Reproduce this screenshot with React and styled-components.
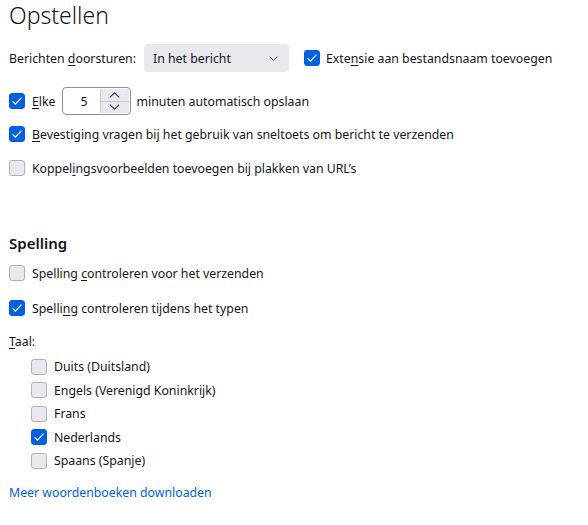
import React from "react";
import styled, { createGlobalStyle } from "styled-components";

const Global = createGlobalStyle`
  html, body { margin: 0; padding: 0; background: #ffffff; }
  body {
    font-family: "Noto Sans", "Open Sans", sans-serif;
    font-size: 12.3px;
    color: #15141a;
  }
`;

const Page = styled.div`
  display: flex;
  flex-direction: column;
  padding: 0 9px;
  width: 570px;
`;

const Title = styled.h1`
  margin: 0;
  line-height: 30px;
  font-size: 23px;
  font-weight: 300;
`;

const SubTitle = styled.h2`
  margin: 49px 0 0;
  line-height: 24px;
  font-size: 15px;
  font-weight: 600;
`;

const Row = styled.div`
  display: flex;
  align-items: center;
  height: ${(p) => p.$h || 28}px;
  margin-top: ${(p) => p.$mt || 0}px;
  padding-left: ${(p) => p.$indent || 0}px;
  white-space: nowrap;
`;

const Label = styled.span`
  margin-left: ${(p) => p.$ml || 0}px;
`;

const U = styled.span`
  text-decoration: underline;
  text-underline-offset: 2px;
`;

const Box = styled.span`
  flex: none;
  box-sizing: border-box;
  width: 16px;
  height: 16px;
  border-radius: 3px;
  display: inline-flex;
  align-items: center;
  justify-content: center;
  background: ${(p) => (p.$on ? "#0061e0" : "#e9e9ed")};
  border: 1px solid ${(p) => (p.$on ? "#0061e0" : "#b1b1b9")};
  margin-left: ${(p) => p.$ml || 0}px;
`;

const Check = ({ on, ml }) => (
  <Box $on={on} $ml={ml}>
    {on && (
      <svg width="14" height="14" viewBox="0 0 14 14">
        <path d="M2.6 7.3 L5.4 10.1 L11.4 3.6" fill="none" stroke="#fff" strokeWidth="1.2" />
      </svg>
    )}
  </Box>
);

const Select = styled.div`
  box-sizing: border-box;
  width: 145px;
  height: 28px;
  margin-left: 8px;
  border-radius: 4px;
  background: #e9e9ed;
  display: flex;
  align-items: center;
  justify-content: space-between;
  padding: 0 11px 0 9px;
`;

const Spinner = styled.div`
  box-sizing: border-box;
  display: flex;
  width: 69px;
  height: 28px;
  margin: 0 6px 0 6px;
  border: 1px solid #8f8f9d;
  border-radius: 4px;
  overflow: hidden;
`;

const SpinValue = styled.div`
  flex: 1;
  display: flex;
  align-items: center;
  justify-content: flex-end;
  padding-right: 12px;
`;

const SpinButtons = styled.div`
  display: flex;
  flex-direction: column;
  width: 28px;
  border-left: 1px solid #c8c8cf;
  margin: 1px 1px 1px 0;
`;

const SpinButton = styled.div`
  flex: 1;
  display: flex;
  align-items: center;
  justify-content: center;
  background: #e9e9ed;
  & + & { border-top: 1px solid #c8c8cf; }
`;

const List = styled.div`
  display: flex;
  flex-direction: column;
  margin-top: 4px;
`;

const Link = styled.a`
  display: block;
  margin-top: 10.5px;
  line-height: 20px;
  color: #0061e0;
  text-decoration: none;
`;

const Chevron = ({ up, w = 11, h = 6 }) => (
  <svg width={w} height={h} viewBox="0 0 11 6">
    <path
      d={up ? "M0.8 5.4 L5.5 0.8 L10.2 5.4" : "M0.8 0.6 L5.5 5.2 L10.2 0.6"}
      fill="none"
      stroke="#3a3a40"
      strokeWidth="1.1"
    />
  </svg>
);

const langs = [
  ["Duits (Duitsland)", false],
  ["Engels (Verenigd Koninkrijk)", false],
  ["Frans", false],
  ["Nederlands", true],
  ["Spaans (Spanje)", false],
];

export default function App() {
  return (
    <>
      <Global />
      <Page>
        <Title>Opstellen</Title>

        <Row $mt={14}>
          <Label>
            Berichten <U>d</U>oorsturen:
          </Label>
          <Select>
            <span>In het bericht</span>
            <Chevron w={9} h={5} />
          </Select>
          <Check on ml={15} />
          <Label $ml={6}>
            Exte<U>n</U>sie aan bestandsnaam toevoegen
          </Label>
        </Row>

        <Row $mt={15}>
          <Check on />
          <Label $ml={7}>
            <U>E</U>lke
          </Label>
          <Spinner>
            <SpinValue>5</SpinValue>
            <SpinButtons>
              <SpinButton>
                <Chevron up />
              </SpinButton>
              <SpinButton>
                <Chevron />
              </SpinButton>
            </SpinButtons>
          </Spinner>
          <Label>minuten automatisch opslaan</Label>
        </Row>

        <Row $mt={5}>
          <Check on />
          <Label $ml={7}>
            <U>B</U>evestiging vragen bij het gebruik van sneltoets om bericht te verzenden
          </Label>
        </Row>

        <Row $mt={6}>
          <Check />
          <Label $ml={7}>
            Koppel<U>i</U>ngsvoorbeelden toevoegen bij plakken van URL’s
          </Label>
        </Row>

        <SubTitle>Spelling</SubTitle>

        <Row $mt={4}>
          <Check />
          <Label $ml={7}>
            Spelling <U>c</U>ontroleren voor het verzenden
          </Label>
        </Row>

        <Row $mt={7}>
          <Check on />
          <Label $ml={7}>
            Spelli<U>n</U>g controleren tijdens het typen
          </Label>
        </Row>

        <Row $mt={9} $h={20}>
          <Label>
            <U>T</U>aal:
          </Label>
        </Row>

        <List>
          {langs.map(([name, on]) => (
            <Row key={name} $h={23.5} $indent={22}>
              <Check on={on} />
              <Label $ml={7}>{name}</Label>
            </Row>
          ))}
        </List>

        <Link href="#">Meer woordenboeken downloaden</Link>
      </Page>
    </>
  );
}
